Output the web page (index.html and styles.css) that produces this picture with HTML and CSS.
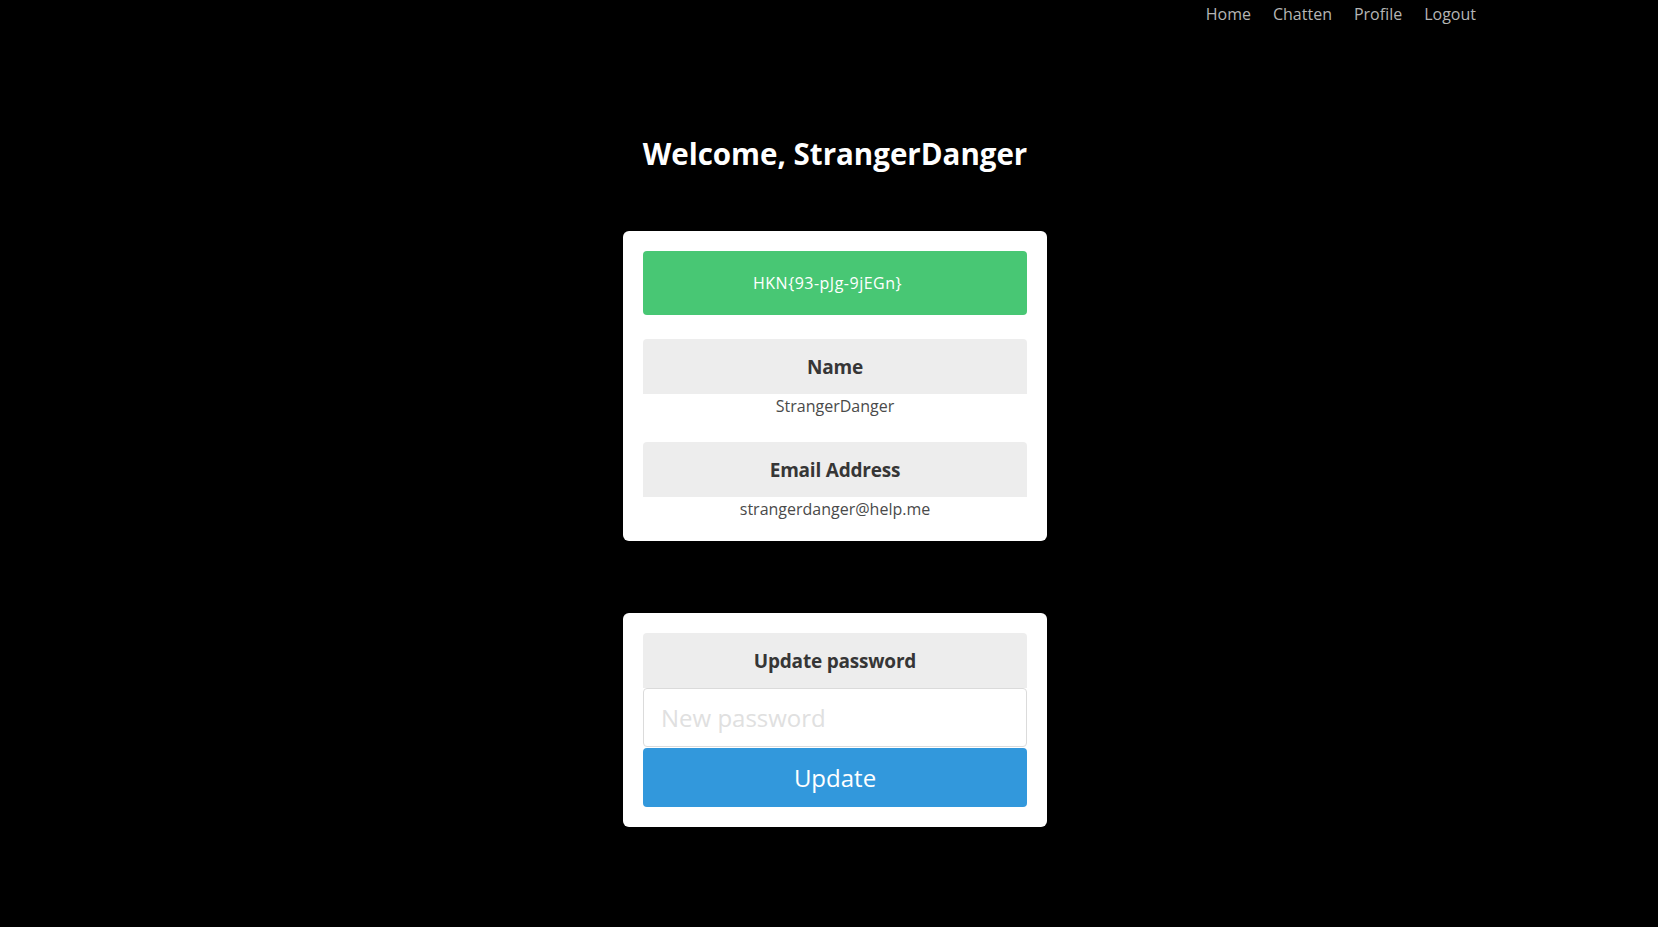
FILE: index.html
```html
<!DOCTYPE html>
<html lang="en">
<head>
<meta charset="utf-8">
<title>Profile</title>
<link rel="stylesheet" href="styles.css">
</head>
<body>
<nav class="nav">
  <a class="nav-item" href="#">Home</a>
  <a class="nav-item" href="#">Chatten</a>
  <a class="nav-item" href="#">Profile</a>
  <a class="nav-item" href="#">Logout</a>
</nav>
<main class="main">
  <h1 class="title">Welcome, StrangerDanger</h1>
  <section class="card">
    <div class="flag">HKN{93-pJg-9jEGn}</div>
    <div class="field">
      <div class="field-head">Name</div>
      <div class="field-value">StrangerDanger</div>
    </div>
    <div class="field">
      <div class="field-head">Email Address</div>
      <div class="field-value">strangerdanger@help.me</div>
    </div>
  </section>
  <section class="card card-form">
    <div class="field-head">Update password</div>
    <input class="input" type="password" placeholder="New password">
    <button class="button" type="button">Update</button>
  </section>
</main>
</body>
</html>
```
FILE: styles.css
```css
* { box-sizing: border-box; }
html, body {
  margin: 0;
  padding: 0;
  background: #000;
  height: 100%;
}
body {
  font-family: "Open Sans", "Noto Sans", sans-serif;
  color: #363636;
  font-size: 16px;
}
.nav {
  display: flex;
  justify-content: flex-end;
  padding: 2px 171px 0 0;
  height: 28px;
}
.nav-item {
  color: #b5b5b5;
  text-decoration: none;
  padding: 0 11px;
  line-height: 24px;
  font-size: 16px;
}
.main {
  display: flex;
  flex-direction: column;
  align-items: center;
  padding-left: 12px;
}
.title {
  margin: 106px 0 0 0;
  color: #fff;
  font-size: 29.5px;
  font-weight: 700;
  line-height: 40px;
  height: 40px;
}
.card {
  margin-top: 57px;
  width: 424px;
  background: #fff;
  border-radius: 6px;
  padding: 20px;
  display: flex;
  flex-direction: column;
  gap: 24px;
}
.card-form {
  margin-top: 72px;
  gap: 0;
}
.flag {
  background: #48c774;
  color: #fff;
  border-radius: 4px;
  text-align: center;
  padding: 20px 35px 20px 20px;
  line-height: 24px;
  letter-spacing: 0.5px;
}
.field {
  display: flex;
  flex-direction: column;
}
.field-head {
  background: #ededed;
  border-radius: 4px 4px 0 0;
  text-align: center;
  font-weight: 700;
  font-size: 19px;
  letter-spacing: -0.2px;
  line-height: 31px;
  padding: 13px 12px 11px;
  color: #363636;
}
.field-value {
  text-align: center;
  line-height: 24px;
  color: #4a4a4a;
}
.input {
  display: block;
  width: 100%;
  height: 59px;
  border: 1px solid #dbdbdb;
  border-radius: 4px;
  font-family: inherit;
  font-size: 24px;
  padding: 0 17px;
  color: #363636;
  background: #fff;
  outline: none;
}
.input::placeholder {
  color: #e0e0e0;
}
.button {
  display: block;
  width: 100%;
  height: 59px;
  margin-top: 1px;
  border: 0;
  border-radius: 4px;
  background: #3298dc;
  color: #fff;
  font-family: inherit;
  font-size: 24px;
  cursor: pointer;
}
```
